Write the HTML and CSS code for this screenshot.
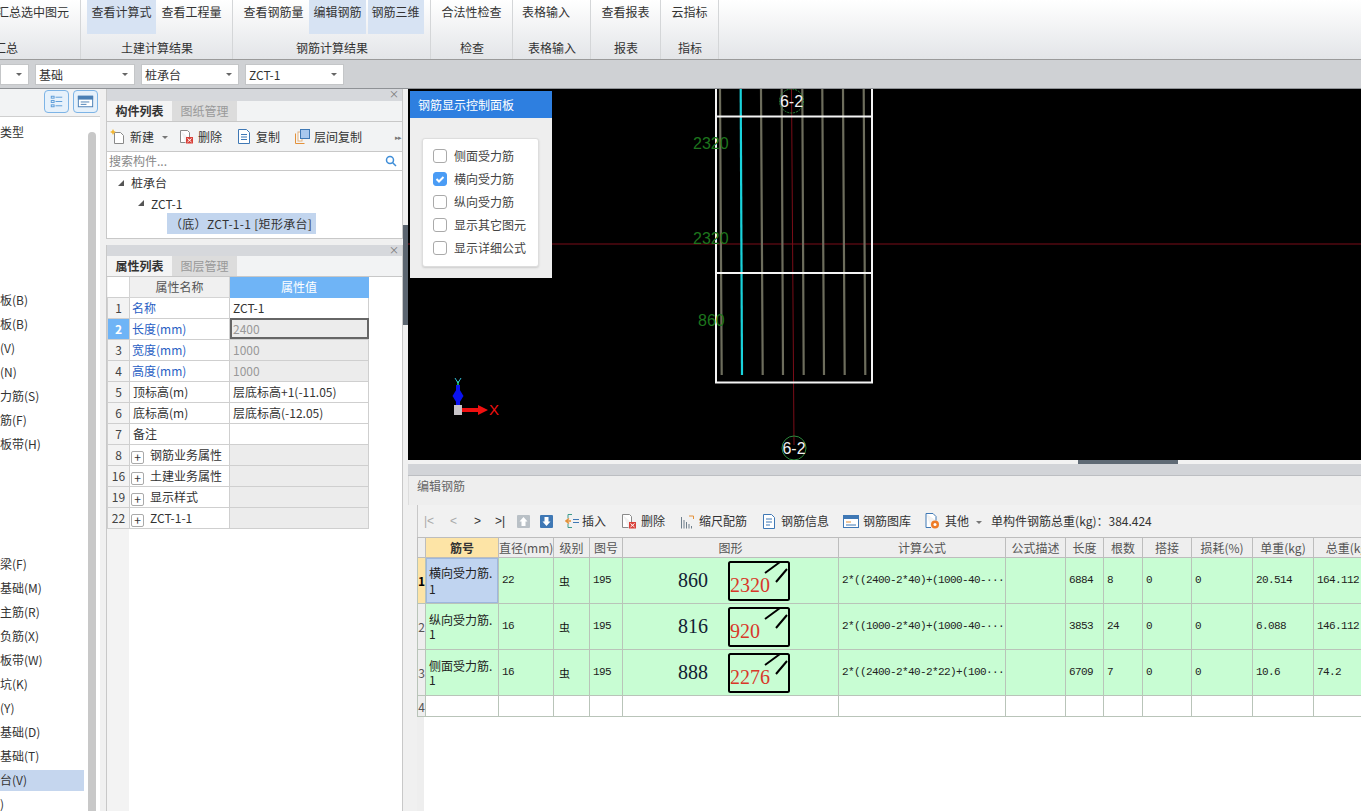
FILE: index.html
```html
<!DOCTYPE html>
<html lang="zh">
<head>
<meta charset="utf-8">
<title>钢筋</title>
<link rel="stylesheet" href="styles.css">
</head>
<body>
<header class="ribbon">
  <section class="group">
    <div class="btns start"><span class="btn clip3">汇总选中图元</span></div>
    <div class="glabel startlabel">汇总</div>
  </section>
  <section class="group">
    <div class="btns"><span class="btn on">查看计算式</span><span class="btn">查看工程量</span></div>
    <div class="glabel">土建计算结果</div>
  </section>
  <section class="group">
    <div class="btns"><span class="btn">查看钢筋量</span><span class="btn on">编辑钢筋</span><span class="btn on">钢筋三维</span></div>
    <div class="glabel">钢筋计算结果</div>
  </section>
  <section class="group">
    <div class="btns"><span class="btn">合法性检查</span></div>
    <div class="glabel">检查</div>
  </section>
  <section class="group">
    <div class="btns shifted"><span class="btn">表格输入</span></div>
    <div class="glabel">表格输入</div>
  </section>
  <section class="group">
    <div class="btns"><span class="btn">查看报表</span></div>
    <div class="glabel">报表</div>
  </section>
  <section class="group">
    <div class="btns"><span class="btn">云指标</span></div>
    <div class="glabel">指标</div>
  </section>
</header>

<div class="combobar">
  <div class="combo c0"><i class="caret"></i></div>
  <div class="combo c1"><span>基础</span><i class="caret"></i></div>
  <div class="combo c2"><span>桩承台</span><i class="caret"></i></div>
  <div class="combo c3"><span>ZCT-1</span><i class="caret"></i></div>
</div>

<main class="workspace">
  <aside class="left">
    <div class="left-head">
      <span class="viewbtn"><svg width="23" height="21" viewBox="0 0 24 22"><g fill="none" stroke="#5a9bd8"><rect x="6.500" y="5.500" width="3" height="2"/><rect x="6.500" y="10" width="3" height="2"/><rect x="6.500" y="14.500" width="3" height="2"/><path d="M11 6.500h7M11 11h7M11 15.500h7"/></g></svg></span>
      <span class="viewbtn"><svg width="23" height="21" viewBox="1 0 24 22"><rect x="5.500" y="5.500" width="15" height="11" fill="#fff" stroke="#4a7fb5"/><rect x="5" y="5" width="16" height="4" fill="#4a7fb5"/><path d="M8 11.500h9M8 14h6" stroke="#4a7fb5"/></svg></span>
    </div>
    <div class="left-body">
      <ul class="nav">
        <li>类型</li><li></li><li></li><li></li><li></li><li></li><li></li>
        <li>板(B)</li><li>板(B)</li><li>(V)</li><li>(N)</li><li>力筋(S)</li><li>筋(F)</li><li>板带(H)</li>
        <li></li><li></li><li></li><li></li>
        <li>梁(F)</li><li>基础(M)</li><li>主筋(R)</li><li>负筋(X)</li><li>板带(W)</li><li>坑(K)</li><li>(Y)</li><li>基础(D)</li><li>基础(T)</li>
        <li class="sel">台(V)</li><li>)</li>
      </ul>
      <div class="scroll"></div>
    </div>
  </aside>

  <div class="mid">
    <section class="pane pane-top">
      <div class="pane-bar"><span class="close">×</span></div>
      <div class="tabs"><span class="tab active">构件列表</span><span class="tab">图纸管理</span></div>
      <div class="mid-tools">
        <span class="tool t-new"><svg width="16" height="16" viewBox="0 0 16 16"><path d="M4.500 3.500h6l3 3v8h-9z" fill="#fff" stroke="#8a8a8a"/><path d="M3 0l1 2 2 1-2 1-1 2-1-2-2-1 2-1z" fill="#f2b632"/></svg>新建</span>
        <i class="mini-caret t-caret"></i>
        <span class="tool t-del"><svg width="15" height="15" viewBox="0 0 15 15"><path d="M1.500 1.500h7l2 2v6M1.500 1.500v12h5" fill="#fff" stroke="#8a8a8a"/><rect x="7" y="8" width="7" height="6.500" fill="#d9413a"/><path d="M8.500 9.500l4 3.500m0-3.500l-4 3.500" stroke="#fff"/></svg>删除</span>
        <span class="tool t-copy"><svg width="12" height="15" viewBox="0 0 12 15"><path d="M.5.500h8l3 3v11H.500z" fill="#fff" stroke="#3f78b5"/><path d="M3 5.500h6M3 8h6M3 10.500h6" stroke="#3f78b5"/></svg>复制</span>
        <span class="tool t-floor"><svg width="15" height="15" viewBox="0 0 15 15"><path d="M.5 4.500v10h9" fill="none" stroke="#e4913a"/><rect x="3" y="3" width="4" height="9" fill="#fff" stroke="#e4b07a"/><rect x="5.500" y=".5" width="9" height="9" fill="#a9c8ee" stroke="#3f78b5"/></svg>层间复制</span>
        <span class="more">▸▸</span>
      </div>
      <div class="search"><span>搜索构件...</span><svg width="12" height="12" viewBox="0 0 12 12"><circle cx="5" cy="5" r="3.500" fill="none" stroke="#3f8ed8" stroke-width="1.500"/><path d="M7.500 7.500l3.500 3.500" stroke="#3f8ed8" stroke-width="1.500"/></svg></div>
      <div class="tree">
        <div class="node n1"><i class="tri"></i>桩承台</div>
        <div class="node n2"><i class="tri"></i>ZCT-1</div>
        <div class="node n3"><span class="leaf">（底）ZCT-1-1 [矩形承台]</span></div>
      </div>
    </section>
    <section class="pane pane-bottom">
      <div class="pane-bar short"><span class="close">×</span></div>
      <div class="tabs"><span class="tab active">属性列表</span><span class="tab">图层管理</span></div>
      <div class="props-wrap">
      <table class="props">
        <colgroup><col class="p0"><col class="p1"><col class="p2"></colgroup>
        <thead><tr><th class="corner"></th><th>属性名称</th><th class="hval">属性值</th></tr></thead>
        <tbody>
          <tr><td class="rh">1</td><td class="blue">名称</td><td>ZCT-1</td></tr>
          <tr><td class="rh rsel">2</td><td class="blue">长度(mm)</td><td class="lock cursor">2400</td></tr>
          <tr><td class="rh">3</td><td class="blue">宽度(mm)</td><td class="lock">1000</td></tr>
          <tr><td class="rh">4</td><td class="blue">高度(mm)</td><td class="lock">1000</td></tr>
          <tr><td class="rh">5</td><td>顶标高(m)</td><td>层底标高+1(-11.05)</td></tr>
          <tr><td class="rh">6</td><td>底标高(m)</td><td>层底标高(-12.05)</td></tr>
          <tr><td class="rh">7</td><td>备注</td><td></td></tr>
          <tr><td class="rh">8</td><td><i class="plus">+</i>钢筋业务属性</td><td class="grp"></td></tr>
          <tr><td class="rh">16</td><td><i class="plus">+</i>土建业务属性</td><td class="grp"></td></tr>
          <tr><td class="rh">19</td><td><i class="plus">+</i>显示样式</td><td class="grp"></td></tr>
          <tr><td class="rh">22</td><td><i class="plus">+</i>ZCT-1-1</td><td class="grp"></td></tr>
        </tbody>
      </table>
      </div>
    </section>
  </div>

  <div class="vsplit"><span class="vhandle"></span></div>

  <div class="right">
    <div class="canvas">
      <svg class="drawing" width="953" height="371" viewBox="408 89 953 371">
        <path d="M408 244H1361" stroke="#7a0d18"/>
        <path d="M791.500 89L794 445" stroke="#7a0d18"/>
        <g stroke="#6d6d5c" stroke-width="2.200">
          <path d="M720 89L721.700 375M761 89L762.700 375M781.700 89L783 375M802.300 89L803.700 375M822.300 89L824 375M843 89L844.700 375M863.700 89L865.300 375"/>
        </g>
        <path d="M740.700 89L742 375" stroke="#19d3dc" stroke-width="2.200"/>
        <g fill="none" stroke="#f4f4f4" stroke-width="2">
          <path d="M716 89V382.500H872V89"/>
          <path d="M716 116.500H872M716 273H872"/>
        </g>
        <circle cx="791.500" cy="101" r="12" fill="none" stroke="#2d8a3c" stroke-dasharray="2 1"/>
        <circle cx="794" cy="448" r="12" fill="none" stroke="#2d8a3c"/>
        <text class="axis-no" x="791.500" y="107">6-2</text>
        <text class="axis-no" x="794" y="454">6-2</text>
        <text class="dim" x="693" y="149">2320</text>
        <text class="dim" x="693" y="244">2320</text>
        <text class="dim" x="698" y="326">860</text>
        <path d="M458 381V405" stroke="#18a94a" stroke-width="2"/>
        <path d="M455 378l3 5 3-5" fill="none" stroke="#34c0d8"/>
        <path d="M458 387l5.500 9-5.500 9-5.500-9z" fill="#0a12f0"/>
        <rect x="456" y="385" width="4" height="21" fill="#0a12f0"/>
        <rect x="454" y="405" width="8" height="10" fill="#c8c4c8"/>
        <path d="M462 408h16v-3l10 5-10 5v-3h-16z" fill="#f01010"/>
        <text class="axis-x" x="489" y="415">X</text>
      </svg>
      <div class="ctrl">
        <div class="ctrl-head">钢筋显示控制面板</div>
        <div class="ctrl-body">
          <div class="ctrl-card">
            <label class="chk"><i class="box"></i>侧面受力筋</label>
            <label class="chk"><i class="box checked"><svg width="14" height="14" viewBox="0 0 14 14"><path d="M3.500 7l2.500 2.500 4.500-4.500" fill="none" stroke="#fff" stroke-width="2"/></svg></i>横向受力筋</label>
            <label class="chk"><i class="box"></i>纵向受力筋</label>
            <label class="chk"><i class="box"></i>显示其它图元</label>
            <label class="chk"><i class="box"></i>显示详细公式</label>
          </div>
        </div>
      </div>
    </div>
    <div class="hsplit"><span class="hhandle"></span></div>
    <div class="hbar"></div>
    <div class="edit-title">编辑钢筋</div>
    <div class="edit-tools">
      <span class="nv n-a">|&lt;</span><span class="nv n-b">&lt;</span><span class="nv n-c">&gt;</span><span class="nv n-d">&gt;|</span>
      <svg class="i-up" width="13" height="13" viewBox="0 0 13 13"><rect width="13" height="13" rx="1" fill="#b9c0c6"/><path d="M6.500 2l4 4.500H8.500V11h-4V6.500h-2z" fill="#fff"/></svg>
      <svg class="i-down" width="13" height="13" viewBox="0 0 13 13"><rect width="13" height="13" rx="1" fill="#3f78b5"/><path d="M6.500 11l4-4.500H8.500V2h-4v4.500h-2z" fill="#fff"/></svg>
      <span class="et e-ins"><svg width="14" height="16" viewBox="0 0 14 16"><path d="M3 1.500h4M3 14.500h4M3 1.500v4M3 14.500v-4" fill="none" stroke="#3f9a8c"/><path d="M6 8H2m2-2.500L1 8l3 2.500" fill="none" stroke="#e4913a" stroke-width="1.500"/><path d="M8 6.500h6M8 9.500h6" stroke="#3f78b5"/></svg>插入</span>
      <span class="et e-del"><svg width="16" height="16" viewBox="0 0 16 16"><path d="M1.500 1.500h7l2 2v6M1.500 1.500v13h6" fill="#fff" stroke="#8a8a8a"/><rect x="8" y="9" width="7" height="6.500" fill="#d9413a"/><path d="M9.500 10.500l4 3.500m0-3.500l-4 3.500" stroke="#fff"/></svg>删除</span>
      <span class="et e-scale"><svg width="15" height="15" viewBox="0 0 15 15"><path d="M1.500 3v11.500M4 6v8.500M6.500 8v6.500M9 10v4.500M11.500 12v2.500" stroke="#6f7f8c"/><path d="M9 2h4.500v3" fill="none" stroke="#e4913a"/></svg>缩尺配筋</span>
      <span class="et e-info"><svg width="14" height="15" viewBox="0 0 14 15"><path d="M1.500.5h8l3 3v11h-11z" fill="#fff" stroke="#3f78b5"/><path d="M4 5h6M4 8h6M4 11h4" stroke="#3f78b5"/></svg>钢筋信息</span>
      <span class="et e-lib"><svg width="16" height="13" viewBox="0 0 16 13"><rect x=".5" y=".5" width="15" height="12" fill="#fff" stroke="#3f78b5"/><rect x="1" y="1" width="14" height="3" fill="#3f78b5"/><path d="M3 7h5" stroke="#e4913a"/><path d="M3 10h10" stroke="#3f78b5"/></svg>钢筋图库</span>
      <span class="et e-other"><svg width="16" height="16" viewBox="0 0 16 16"><path d="M1 .5h7l3 3v4M1 .5v14h5" fill="#fff" stroke="#3f78b5"/><circle cx="10" cy="11.500" r="4" fill="#ee7b26"/><circle cx="10" cy="11.500" r="1.500" fill="#fff"/></svg>其他</span>
      <i class="mini-caret e-caret"></i>
      <span class="total">单构件钢筋总重(kg)：384.424</span>
    </div>
    <div class="grid-wrap">
      <table class="grid">
        <colgroup>
          <col class="g0"><col class="g1"><col class="g2"><col class="g3"><col class="g4"><col class="g5"><col class="g6"><col class="g7"><col class="g8"><col class="g9"><col class="g10"><col class="g11"><col class="g12"><col class="g13">
        </colgroup>
        <thead>
          <tr><th></th><th class="hkey">筋号</th><th>直径(mm)</th><th>级别</th><th>图号</th><th>图形</th><th>计算公式</th><th>公式描述</th><th>长度</th><th>根数</th><th>搭接</th><th>损耗(%)</th><th>单重(kg)</th><th>总重(kg)</th></tr>
        </thead>
        <tbody>
          <tr class="data">
            <td class="rn rn-cur">1</td><td class="name name-cur">横向受力筋.<br>1</td><td>22</td><td class="gr">虫</td><td>195</td>
            <td class="fig"><div class="figin"><span class="figlen">860</span><svg width="62" height="40" viewBox="0 0 62 40"><rect x="1" y="1" width="60" height="38" rx="1.500" fill="none" stroke="#000" stroke-width="2"/><path d="M37 12L52 1M48 21L59 8" stroke="#000" stroke-width="2"/><text class="figtxt" x="2" y="31">2320</text></svg></div></td>
            <td>2*((2400-2*40)+(1000-40-···</td><td></td><td>6884</td><td>8</td><td>0</td><td>0</td><td>20.514</td><td>164.112</td>
          </tr>
          <tr class="data">
            <td class="rn">2</td><td class="name">纵向受力筋.<br>1</td><td>16</td><td class="gr">虫</td><td>195</td>
            <td class="fig"><div class="figin"><span class="figlen">816</span><svg width="62" height="40" viewBox="0 0 62 40"><rect x="1" y="1" width="60" height="38" rx="1.500" fill="none" stroke="#000" stroke-width="2"/><path d="M37 12L52 1M48 21L59 8" stroke="#000" stroke-width="2"/><text class="figtxt" x="2" y="31">920</text></svg></div></td>
            <td>2*((1000-2*40)+(1000-40-···</td><td></td><td>3853</td><td>24</td><td>0</td><td>0</td><td>6.088</td><td>146.112</td>
          </tr>
          <tr class="data">
            <td class="rn">3</td><td class="name">侧面受力筋.<br>1</td><td>16</td><td class="gr">虫</td><td>195</td>
            <td class="fig"><div class="figin"><span class="figlen">888</span><svg width="62" height="40" viewBox="0 0 62 40"><rect x="1" y="1" width="60" height="38" rx="1.500" fill="none" stroke="#000" stroke-width="2"/><path d="M37 12L52 1M48 21L59 8" stroke="#000" stroke-width="2"/><text class="figtxt" x="2" y="31">2276</text></svg></div></td>
            <td>2*((2400-2*40-2*22)+(100···</td><td></td><td>6709</td><td>7</td><td>0</td><td>0</td><td>10.6</td><td>74.2</td>
          </tr>
          <tr class="blank">
            <td class="rn">4</td><td></td><td></td><td></td><td></td><td></td><td></td><td></td><td></td><td></td><td></td><td></td><td></td><td></td>
          </tr>
        </tbody>
      </table>
    </div>
  </div>
</main>
</body>
</html>
```

FILE: styles.css
```css
* { box-sizing: border-box; }
html, body { margin: 0; padding: 0; }
body {
  width: 1361px; height: 811px; overflow: hidden;
  font: 12px/16px "Noto Sans CJK SC", "Open Sans", sans-serif;
  color: #333; background: #f0f0f0;
}
i { font-style: normal; }

/* ribbon */
.ribbon {
  height: 60px; display: grid;
  grid-template-columns: 81px 152px 198px 82px 78px 70px 58px 1fr;
  background: linear-gradient(#fff, #e3e5e8);
  border-bottom: 1px solid #9a9a9a;
}
.group { border-right: 1px solid #d4d6d8; overflow: hidden; display: flex; flex-direction: column; }
.btns { height: 40px; display: flex; justify-content: center; gap: 2px; align-items: flex-start; }
.btns.start { justify-content: flex-start; }
.btns.shifted { padding-right: 11px; }
.btn { height: 34px; padding: 4px 4px 0; white-space: nowrap; }
.btn.on { background: #d7e3f3; }
.btn.clip3 { margin-left: -7px; }
.glabel { text-align: center; line-height: 16px; padding-left: 1px; white-space: nowrap; }
.startlabel { text-align: left; margin-left: -6px; padding-left: 0; }

/* combos */
.combobar { height: 29px; background: #cfd1d4; display: flex; padding-top: 4px; gap: 6px; border-bottom: 1px solid #8f9296; }
.combo { height: 21px; background: #fff; border: 1px solid #c4c6c8; display: flex; align-items: center; justify-content: space-between; padding: 0 6px 0 3px; white-space: nowrap; }
.c0 { width: 29px; justify-content: flex-end; }
.c1 { width: 100px; }
.c2 { width: 98px; }
.c3 { width: 99px; }
.caret { width: 0; height: 0; border: 3px solid transparent; border-top: 3px solid #666; border-bottom: 0; }

/* workspace */
.workspace { height: 722px; display: flex; }
.left { width: 105px; display: flex; flex-direction: column; border-right: 5px solid #f0f0f0; background: #fff; }
.left-head { height: 28px; flex: none; background: #f2f3f4; border-bottom: 1px solid #cfcfcf; display: flex; justify-content: flex-end; gap: 4px; padding: 1px 2px 0 0; }
.viewbtn { width: 25px; height: 23px; border: 1px solid #7db4e6; border-radius: 4px; background: #e6f1fb; display: flex; align-items: center; }
.left-body { flex: 1; display: flex; overflow: hidden; }
.nav { list-style: none; margin: 0; padding: 5px 0 0; width: 88px; flex: none; }
.nav li { height: 21px; margin-bottom: 3px; width: 84px; line-height: 20px; white-space: nowrap; overflow: hidden; }
.nav li.sel { background: #c5d6ee; }
.scroll { width: 8px; margin-top: 15px; background: #c8c8c8; border-radius: 4px 4px 0 0; }

.mid { width: 298px; display: flex; flex-direction: column; gap: 6px; padding-left: 1px; background: #f0f0f0; }
.pane { background: #fff; border-right: 1px solid #c8c8c8; border-left: 1px solid #c8c8c8; display: flex; flex-direction: column; }
.pane-top { height: 150px; border-bottom: 1px solid #c8c8c8; }
.pane-bottom { flex: 1; }
.pane-bar { height: 12px; flex: none; background: #d6d8dc; position: relative; }
.pane-bar.short { height: 11px; }
.close { position: absolute; right: 3px; top: -1px; color: #777; font-size: 10px; line-height: 12px; }
.tabs { height: 21px; flex: none; background: #f2f3f4; border-bottom: 1px solid #c8c8c8; display: flex; }
.tab { width: 65px; text-align: center; line-height: 20px; color: #999; background: #dcdcdc; }
.tab.active { color: #333; background: #f4f4f4; font-weight: 700; width: 65px; }
.mid-tools { height: 30px; flex: none; background: #f2f3f4; border-bottom: 1px solid #c8c8c8; display: flex; align-items: center; padding-left: 3px; position: relative; }
.tool { display: inline-flex; align-items: center; gap: 4px; white-space: nowrap; }
.mini-caret { width: 0; height: 0; border: 3px solid transparent; border-top: 3px solid #777; border-bottom: 0; margin-top: 2px; }
.t-caret { margin-left: 8px; }
.t-del { margin-left: 11px; }
.t-copy { margin-left: 16px; gap: 6px; }
.t-floor { margin-left: 15px; }
.more { position: absolute; right: 1px; top: 7px; color: #777; font-size: 7px; letter-spacing: -1px; }
.search { height: 19px; flex: none; border-bottom: 1px solid #c8c8c8; display: flex; align-items: center; justify-content: space-between; padding: 0 5px 0 2px; color: #888; }
.tree { flex: 1; padding-top: 1px; }
.node { height: 21px; line-height: 21px; display: flex; align-items: center; white-space: nowrap; }
.n1 { padding-left: 11px; }
.n2 { padding-left: 31px; height: 20px; }
.n3 { padding-left: 60px; }
.tri { width: 0; height: 0; border-style: solid; border-width: 0 0 6px 6px; border-color: transparent transparent #555 transparent; margin-right: 7px; }
.leaf { background: #c2d5ee; height: 21px; width: 149px; line-height: 21px; display: block; padding-left: 3px; letter-spacing: .3px; }

.props-wrap { flex: 1; background: linear-gradient(to right, #f3f3f3 22px, #fff 22px); }
.props { border-collapse: collapse; table-layout: fixed; width: 261px; }
.p0 { width: 22px; } .p1 { width: 100px; } .p2 { width: 139px; }
.props th { height: 20px; padding: 0; font-weight: 400; background: #f0f0f0; border: 1px solid #d4d4d4; border-top: 0; color: #555; }
.props th.corner { background: #fff; border: 0; }
.props th.hval { background: #6fb4f6; color: #fff; border-color: #6fb4f6; }
.props td { height: 21px; padding: 0 3px; border: 1px solid #cfcfcf; white-space: nowrap; overflow: hidden; line-height: 20px; }
.props td.blue { padding-left: 2px; }
.props td.rh { background: #f3f3f3; text-align: center; color: #444; padding: 0; }
.props td.rsel { background: #6fb4f6; color: #fff; font-weight: 700; }
.blue { color: #2a5fc4; }
.lock { background: #ececec; color: #999; }
.grp { background: #ececec; }
.props td.cursor { outline: 2px solid #666; outline-offset: -2px; }
.plus { display: inline-block; width: 13px; height: 13px; border: 1px solid #aaa; border-radius: 2px; line-height: 10px; text-align: center; margin: 0 6px 0 -2px; vertical-align: -2px; color: #333; }

.vsplit { width: 5px; background: #f0f0f0; padding-top: 136px; }
.vhandle { display: block; width: 5px; height: 100px; background: #5b6570; }

.right { width: 953px; display: flex; flex-direction: column; overflow: hidden; }
.canvas { height: 371px; background: #000; position: relative; flex: none; overflow: hidden; }
.drawing { display: block; }
.axis-no { fill: #f2f2f2; font: 16px "Liberation Sans", sans-serif; text-anchor: middle; }
.dim { fill: #1d741d; font: 16px "Liberation Sans", sans-serif; }
.axis-x { fill: #f01010; font: 15px "Liberation Sans", sans-serif; }

.ctrl { position: absolute; left: 2px; top: 2px; width: 142px; height: 187px; background: #eee; display: flex; flex-direction: column; }
.ctrl-head { height: 27px; background: #2e7fe0; color: #fff; line-height: 27px; padding-left: 8px; flex: none; }
.ctrl-body { padding: 20px 13px 11px 12px; flex: 1; }
.ctrl-card { height: 129px; background: #fff; border: 1px solid #ddd; border-radius: 3px; padding: 5px 0 0 10px; box-shadow: 0 1px 2px #ccc; }
.chk { display: flex; align-items: center; height: 23px; gap: 7px; color: #444; white-space: nowrap; }
.box { width: 14px; height: 14px; border: 1px solid #aaa; border-radius: 3px; background: #fff; flex: none; display: block; }
.box.checked { background: #4a9cf5; border-color: #4a9cf5; }
.box.checked svg { display: block; margin: -1px; }

.hsplit { height: 4px; flex: none; background: #f2f2f2; padding-left: 670px; }
.hhandle { display: block; width: 100px; height: 5px; background: #5f6a75; }
.hbar { height: 12px; flex: none; background: #d2d4d8; border-bottom: 1px solid #bcbec2; }
.edit-title { height: 29px; flex: none; background: #eee; padding: 2px 0 0 8px; color: #666; line-height: 15px; border-left: 1px solid #ddd; }
.edit-tools { height: 32px; flex: none; background: #f1f1f1; margin-left: 9px; border-left: 1px solid #c8c8c8; display: flex; align-items: center; white-space: nowrap; }
.nv { font-family: "Liberation Sans", sans-serif; color: #333; text-align: left; }
.n-a { width: 26px; margin-left: 6px; color: #aaa; }
.n-b { width: 24px; color: #aaa; }
.n-c { width: 21px; }
.n-d { width: 22px; }
.i-down { margin-left: 10px; }
.et { display: inline-flex; align-items: center; gap: 4px; }
.e-ins { margin-left: 12px; gap: 3px; }
.e-del { margin-left: 15px; }
.e-scale { margin-left: 15px; }
.e-info { margin-left: 15px; gap: 5px; }
.e-lib { margin-left: 14px; }
.e-other { margin-left: 14px; }
.e-caret { margin-left: 7px; }
.total { margin-left: 9px; }

.grid-wrap { flex: 1; margin-left: 9px; overflow: hidden; background: linear-gradient(to right, #eee 7px, #fff 7px); }
.grid { border-collapse: collapse; table-layout: fixed; width: 966px; }
.g0 { width: 8px; } .g1 { width: 73px; } .g2 { width: 55px; } .g3 { width: 36px; } .g4 { width: 33px; }
.g5 { width: 216px; } .g6 { width: 167px; } .g7 { width: 60px; } .g8 { width: 38px; } .g9 { width: 39px; }
.g10 { width: 49px; } .g11 { width: 61px; } .g12 { width: 61px; } .g13 { width: 70px; }
.grid th { height: 20px; padding: 0; font-weight: 400; background: #eee; border: 1px solid #bdbdbd; color: #555; white-space: nowrap; overflow: hidden; }
.grid th.hkey { background: #fde4a6; color: #333; font-weight: 700; }
.grid td { padding: 0 3px; border: 1px solid #b9c4b9; white-space: nowrap; overflow: hidden; }
.data { height: 46px; background: #c8fdd3; font: 11px/13px "Liberation Mono", monospace; letter-spacing: -.6px; color: #222; }
.blank { height: 21px; background: #fff; }
.grid td.rn { padding: 0; text-align: center; font: 12px "Noto Sans CJK SC", sans-serif; letter-spacing: 0; color: #555; background: #eee; }
.grid td.rn-cur { background: #fde4a6; color: #000; font-weight: 700; }
.data td.name { font: 12px/14px "Noto Sans CJK SC", sans-serif; letter-spacing: 0; padding: 0 3px; }
.data td.name-cur { background: #c0d4f0; line-height: 16px; box-shadow: inset 0 0 0 1px #9db8de; }
.data td.gr { font: 11px "Noto Sans CJK SC", sans-serif; letter-spacing: 0; color: #111; padding-left: 5px; }
.grid td.fig { padding: 0; letter-spacing: 0; }
.figin { display: flex; align-items: center; height: 44px; gap: 20px; }
.figlen { width: 85px; text-align: right; font: 20px "Liberation Serif", serif; color: #123; }
.figin svg { display: block; }
.figtxt { fill: #d8382a; font: 20px "Liberation Serif", serif; }
```
